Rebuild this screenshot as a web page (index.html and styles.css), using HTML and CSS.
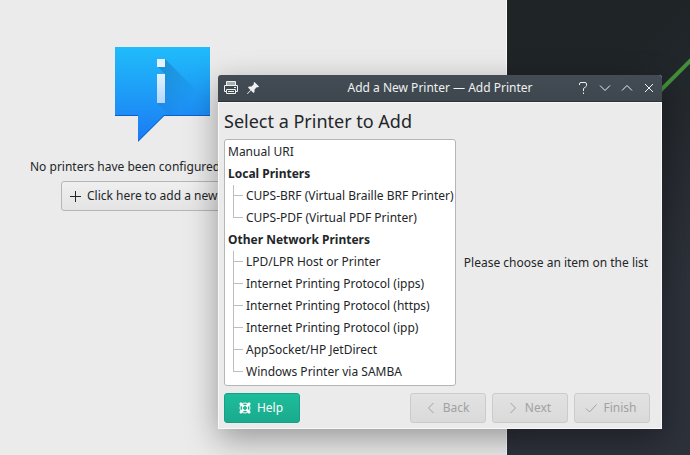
FILE: index.html
```html
<!DOCTYPE html>
<html lang="en">
<head>
<meta charset="utf-8">
<title>Add a New Printer — Add Printer</title>
<link rel="stylesheet" href="styles.css">
</head>
<body>
<div class="desktop">
  <svg class="wallpaper-line" viewBox="0 0 40 40" aria-hidden="true"><path d="M8 39L42 5" stroke="#44903a" stroke-width="4"/></svg>

  <main class="settings">
    <section class="empty">
      <svg class="info" viewBox="0 0 96 96" aria-hidden="true">
        <defs>
          <linearGradient id="bubble" x1="0" y1="0" x2="0" y2="1"><stop offset="0" stop-color="#20bcfa"/><stop offset="1" stop-color="#1b7af4"/></linearGradient>
          <linearGradient id="letter" x1="0" y1="0" x2="0" y2="1"><stop offset="0" stop-color="#e3f2fe"/><stop offset="1" stop-color="#b5d5fb"/></linearGradient>
          <linearGradient id="shade" x1="0" y1="0" x2="1" y2="1"><stop offset="0" stop-color="#124c88" stop-opacity=".35"/><stop offset=".7" stop-color="#124c88" stop-opacity="0"/></linearGradient>
        </defs>
        <path d="M0 1H95V70H49L23 96V70H0z" fill="url(#bubble)"/>
        <path d="M50 13L95 58V70H55L42 57L50 50V28L42 20z" fill="url(#shade)"/>
        <path d="M0 69.500H23M49 69.500H95M23 95L49 69.500" stroke="#0e5fc5" fill="none"/>
        <path d="M42 13h8v8h-8z" fill="#e3f2fe"/>
        <path d="M42 28h8v29h-8z" fill="url(#letter)"/>
      </svg>
      <p class="message">No printers have been configured</p>
      <button class="button add" type="button">
        <svg class="icon" viewBox="0 0 16 16" aria-hidden="true"><path d="M8.500 3v11M3 8.500h11"/></svg>
        Click here to add a new
      </button>
    </section>
  </main>

  <section class="dialog" role="dialog" aria-labelledby="caption">
    <header class="titlebar">
      <svg class="icon" viewBox="0 0 16 16" aria-hidden="true"><path d="M3 2h10v3H3z" fill="#a9aeb2" stroke="none"/><path d="M3.500 5V1.500h9V5M3.500 11.500H1.500v-6h13v6h-2M3.500 9.500h9v4h-9zM5 11.500h6M11 7.500h2"/></svg>
      <svg class="icon pin" viewBox="0 0 16 16" aria-hidden="true"><path d="M9.500 2L14 6.500L13 7.500L12 7L9.500 9.500V12L8.500 13L6 10.500L2.500 14L2 13.500L5.500 10L3 7.500L4 6.500H6.500L9 4L8.500 3z"/></svg>
      <h1 class="caption" id="caption">Add a New Printer — Add Printer</h1>
      <div class="controls">
        <button type="button" aria-label="Help"><svg class="icon" viewBox="0 0 16 16"><path d="M4.500 5V4Q4.500 2.500 6 2.500H10Q11.500 2.500 11.500 4V5.500Q11.500 6.500 10.500 7L8.500 8.500V11M8.500 12.500v1.500"/></svg></button>
        <button type="button" aria-label="Minimize"><svg class="icon" viewBox="0 0 16 16"><path d="M3 5.500l5 5l5-5"/></svg></button>
        <button type="button" aria-label="Maximize"><svg class="icon" viewBox="0 0 16 16"><path d="M3 10.500l5-5l5 5"/></svg></button>
        <button type="button" aria-label="Close"><svg class="icon" viewBox="0 0 16 16"><path d="M4 4l8 8M12 4l-8 8"/></svg></button>
      </div>
    </header>

    <div class="body">
      <h2 class="heading">Select a Printer to Add</h2>
      <div class="columns">
        <ul class="tree">
          <li>Manual URI</li>
          <li><strong>Local Printers</strong>
            <ul>
              <li>CUPS-BRF (Virtual Braille BRF Printer)</li>
              <li>CUPS-PDF (Virtual PDF Printer)</li>
            </ul>
          </li>
          <li><strong>Other Network Printers</strong>
            <ul>
              <li>LPD/LPR Host or Printer</li>
              <li>Internet Printing Protocol (ipps)</li>
              <li>Internet Printing Protocol (https)</li>
              <li>Internet Printing Protocol (ipp)</li>
              <li>AppSocket/HP JetDirect</li>
              <li>Windows Printer via SAMBA</li>
            </ul>
          </li>
        </ul>
        <p class="hint">Please choose an item on the list</p>
      </div>
      <footer class="actions">
        <button class="button help" type="button">
          <svg class="icon" viewBox="0 0 16 16" aria-hidden="true"><circle cx="8" cy="8" r="5"/><circle cx="8" cy="8" r="2.500"/><path d="M3 3l3.500 3.500M13 3l-3.500 3.500M3 13l3.500-3.500M13 13l-3.500-3.500" stroke-width="2.500"/></svg>
          Help
        </button>
        <button class="button" type="button" disabled>
          <svg class="icon" viewBox="0 0 16 16" aria-hidden="true"><path d="M10.500 3l-5 5l5 5"/></svg>
          Back
        </button>
        <button class="button" type="button" disabled>
          <svg class="icon" viewBox="0 0 16 16" aria-hidden="true"><path d="M5.500 3l5 5l-5 5"/></svg>
          Next
        </button>
        <button class="button" type="button" disabled>
          <svg class="icon" viewBox="0 0 16 16" aria-hidden="true"><path d="M3 8.500l3.500 3.500L13.500 4.500"/></svg>
          Finish
        </button>
      </footer>
    </div>
  </section>
</div>
</body>
</html>
```
FILE: styles.css
```css
* {
  box-sizing: border-box;
}

body {
  margin: 0;
  font: 12px/22px "Noto Sans", sans-serif;
  color: #232629;
}

h1, h2, p, ul {
  margin: 0;
  padding: 0;
}

button {
  font: inherit;
  color: inherit;
}

.desktop {
  position: relative;
  display: flex;
  min-height: 100vh;
  overflow: hidden;
  background: linear-gradient(135deg, #1f2427 60%, #2d313a 85%);
}

.wallpaper-line {
  position: absolute;
  top: 54px;
  right: 0;
  width: 40px;
  height: 40px;
}

.icon {
  flex: none;
  width: 16px;
  height: 16px;
  fill: none;
  stroke: currentColor;
}

.settings {
  flex: 0 0 507px;
  padding-top: 46px;
  border-right: 1px solid #fbfbfb;
  background: #ebebeb;
}

.empty {
  display: flex;
  flex-direction: column;
  align-items: center;
  width: 325px;
}

.info {
  width: 96px;
  height: 96px;
}

.message {
  width: 265px;
  margin: 14px 0 3px;
  white-space: nowrap;
}

.button {
  display: flex;
  align-items: center;
  justify-content: center;
  gap: 4px;
  min-width: 76px;
  height: 30px;
  padding: 0 9px 0 5px;
  border: 1px solid #b5b6b7;
  border-radius: 3px;
  background: linear-gradient(#efefef, #e4e4e4);
  white-space: nowrap;
}

.button:disabled {
  border-color: #cbcbcb;
  background: linear-gradient(#e2e2e2, #dadada);
  color: #a0a1a2;
}

.add {
  width: 203px;
  justify-content: flex-start;
}

.dialog {
  position: absolute;
  top: 75px;
  left: 218px;
  right: 28px;
  border-radius: 3px 3px 0 0;
  background: #ebebeb;
  box-shadow: 0 10px 32px rgba(0, 0, 0, .36);
}

.titlebar {
  display: flex;
  align-items: center;
  gap: 6px;
  height: 27px;
  padding: 0 5px;
  border-bottom: 1px solid #2b3237;
  border-radius: 3px 3px 0 0;
  background: linear-gradient(#434c54, #3e474e);
  color: #eff0f1;
}

.pin {
  fill: currentColor;
  stroke: none;
}

.caption {
  flex: 1;
  padding-left: 44px;
  font-size: 12px;
  font-weight: 400;
  text-align: center;
}

.controls {
  display: flex;
  gap: 6px;
}

.controls button {
  display: flex;
  padding: 0;
  border: 0;
  background: none;
}

.body {
  padding: 5px;
  border: 1px solid #f8f8f8;
}

.heading {
  font-size: 18px;
  font-weight: 400;
  line-height: 26px;
  margin-bottom: 5px;
}

.columns {
  display: flex;
  align-items: center;
}

.tree {
  width: 232px;
  padding: 1px 3px 2px;
  border: 1px solid #b5b6b7;
  border-radius: 3px;
  background: #fff;
  list-style: none;
  white-space: nowrap;
}

.tree ul {
  padding-left: 5px;
  list-style: none;
}

.tree ul li {
  display: flex;
}

.tree ul li::before {
  content: "";
  flex: none;
  width: 10px;
  height: 22px;
  margin-right: 3px;
  background:
    linear-gradient(#bdbebf, #bdbebf) 0 0 / 1px 100% no-repeat,
    linear-gradient(#bdbebf, #bdbebf) 0 10px / 10px 1px no-repeat;
}

.tree ul li:last-child::before {
  background-size: 1px 11px, 10px 1px;
}

.hint {
  flex: 1;
  text-align: center;
  white-space: nowrap;
}

.actions {
  display: flex;
  gap: 6px;
  margin-top: 7px;
  padding-right: 6px;
}

.help {
  margin-right: auto;
  border-color: #16a085;
  background: linear-gradient(#1dbd9c, #1aaa8c);
  color: #fcfcfc;
}
```
